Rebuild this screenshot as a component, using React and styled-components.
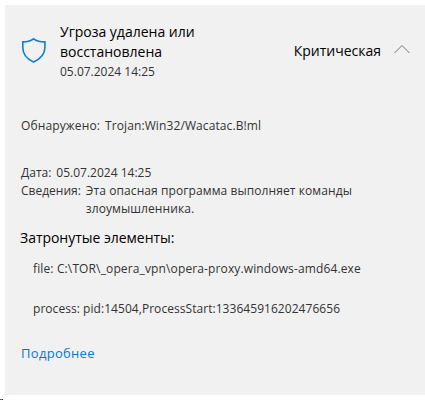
import React from 'react';
import styled, { createGlobalStyle } from 'styled-components';

const GlobalStyle = createGlobalStyle`
  * { box-sizing: border-box; }
  body { margin: 0; background: #fff; overflow: hidden; }
`;

const Page = styled.main`
  width: 425px;
  height: 400px;
  padding-top: 5px;
  font-family: "Open Sans", "Noto Sans", sans-serif;
  white-space: nowrap;
`;

const Card = styled.article`
  height: 390px;
  margin-left: 5px;
  padding: 17px 15px 0 16px;
  background: #f1f1f1;
  color: #333;
`;

const Header = styled.header`
  display: grid;
  grid-template-columns: 39px 1fr auto 29px;
  align-items: start;
  height: 95px;
`;

const ShieldIcon = styled.svg`
  display: block;
  width: 28px;
  height: 28px;
  margin: 14px 0 0 -1px;
`;

const Title = styled.h1`
  margin: 0;
  font-size: 14px;
  font-weight: 400;
  line-height: 20px;
  color: #000;
`;

const Severity = styled.span`
  margin-top: 19px;
  font-size: 14px;
  line-height: 20px;
  color: #000;
`;

const ChevronIcon = styled.svg`
  display: block;
  width: 18px;
  height: 12px;
  margin: 21px 0 0 12px;
`;

const Text = styled.span`
  display: block;
  padding-top: ${(p) => p.$drop || 0}px;
  font-size: 12px;
  line-height: 18px;
  letter-spacing: ${(p) => p.$spacing || 0}px;
`;

const Field = styled.div`
  display: flex;
  gap: ${(p) => p.$gap}px;
  margin-bottom: ${(p) => p.$after || 0}px;
`;

const Subtitle = styled.h2`
  margin: 10px 0 0 -1px;
  font-size: 14px;
  font-weight: 400;
  line-height: 20px;
  letter-spacing: -0.03px;
  color: #000;
`;

const Items = styled.ul`
  display: grid;
  gap: 22px;
  margin: 12px 0 0;
  padding: 0 0 0 12px;
  list-style: none;
`;

const MoreLink = styled.a`
  display: inline-block;
  margin-top: 25px;
  font-size: 13px;
  line-height: 20px;
  letter-spacing: 0.3px;
  color: #0078d7;
`;

const EdgeMark = styled.div`
  width: 3px;
  height: 1px;
  margin-top: 4px;
  background: linear-gradient(90deg, #c82020 0 1px, #5c9cb8 1px 2px, #000060 2px 3px);
`;

export default function App() {
  return (
    <Page>
      <GlobalStyle />
      <Card>
        <Header>
          <ShieldIcon viewBox="0 0 28 28" fill="none" stroke="#0a7ddb" strokeWidth="1.6">
            <path d="M13.5 2.8 C11 4.6 7 5.9 2.8 5.9 V11.5 C2.8 18.5 7.5 23.3 13.5 26 C19.5 23.3 24.9 18.5 24.9 11.5 V5.9 C20.5 5.9 16.2 4.6 13.5 2.8 Z" />
          </ShieldIcon>
          <div>
            <Title>Угроза удалена или<br />восстановлена</Title>
            <Text $drop={1}>05.07.2024 14:25</Text>
          </div>
          <Severity>Критическая</Severity>
          <ChevronIcon viewBox="0 0 18 12" fill="none" stroke="#777" strokeWidth="1">
            <path d="M1.5 10 L9 2.5 L16.5 10" />
          </ChevronIcon>
        </Header>
        <Field $gap={5} $after={29}>
          <Text $spacing={0.13}>Обнаружено:</Text>
          <Text $spacing={0.1}>Trojan:Win32/Wacatac.B!ml</Text>
        </Field>
        <Field $gap={5}>
          <Text>Дата:</Text>
          <Text>05.07.2024 14:25</Text>
        </Field>
        <Field $gap={5}>
          <Text>Сведения:</Text>
          <Text $spacing={0.09}>Эта опасная программа выполняет команды<br />злоумышленника.</Text>
        </Field>
        <Subtitle>Затронутые элементы:</Subtitle>
        <Items>
          <li><Text $spacing={0.13}>file: C:\TOR\_opera_vpn\opera-proxy.windows-amd64.exe</Text></li>
          <li><Text $spacing={0.05}>process: pid:14504,ProcessStart:133645916202476656</Text></li>
        </Items>
        <MoreLink>Подробнее</MoreLink>
      </Card>
      <EdgeMark />
    </Page>
  );
}
